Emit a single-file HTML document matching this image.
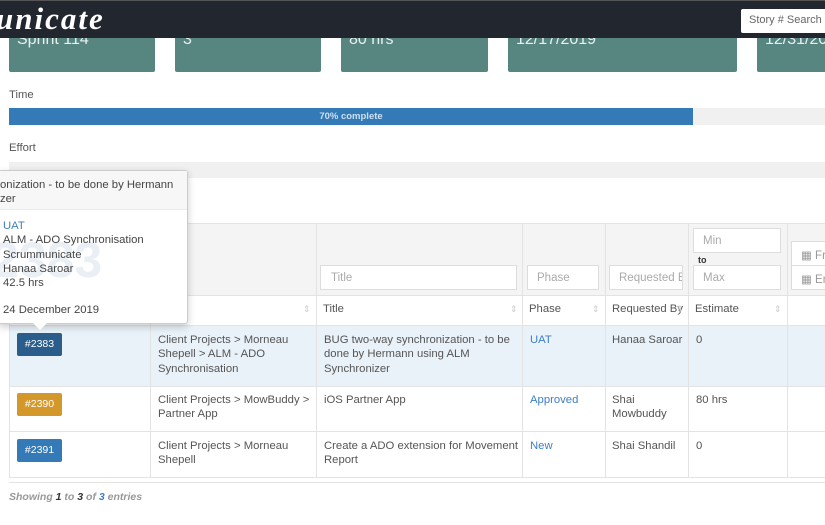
<!DOCTYPE html>
<html><head><meta charset="utf-8"><style>
*{box-sizing:border-box;margin:0;padding:0}
body{width:825px;height:525px;overflow:hidden;background:#fff;font-family:"Liberation Sans",sans-serif;font-size:11px;color:#444;position:relative}
.a{position:absolute}
.box{position:absolute;top:20px;height:52px;background:#578580;border-radius:2px;color:#e8f0ef;font-size:16px;padding:11px 8px 0}
.nav{position:absolute;left:0;top:0;width:825px;height:38px;background:#22262e;border-top:1px solid #555}
.logo{position:absolute;left:-4px;top:0px;color:#fff;font:italic bold 31px "Liberation Serif",serif;letter-spacing:2px}
.srch{position:absolute;left:741px;top:8px;width:90px;height:24px;background:#fff;border-radius:2px;color:#666;font-size:11px;padding:5px 8px}
.inp{position:absolute;height:25px;background:#fff;border:1px solid #ddd;color:#aaa;font-size:11.5px;padding:6px 9px;white-space:nowrap;overflow:hidden}
.vl{position:absolute;width:1px;background:#e3e3e3}
.hl{position:absolute;height:1px;background:#e3e3e3;left:9px;width:816px}
.t{position:absolute;line-height:14.3px;color:#555;font-size:11.3px}
.lnk{color:#3d7fc4}
.badge{position:absolute;left:17px;width:45px;height:23px;color:#fff;font-size:10.5px;text-align:center;line-height:23px;border-radius:2px}
.sort{position:absolute;color:#ccc;font-size:9px}
</style></head><body>
<div class="box" style="left:9px;width:146px">Sprint 114</div>
<div class="box" style="left:175px;width:146px">3</div>
<div class="box" style="left:341px;width:147px">80 hrs</div>
<div class="box" style="left:508px;width:229px">12/17/2019</div>
<div class="box" style="left:757px;width:80px">12/31/2019</div>
<div class="nav"><div class="logo">unicate</div><div class="srch">Story # Search</div></div>

<div class="t" style="left:9px;top:88px">Time</div>
<div class="a" style="left:9px;top:108px;width:816px;height:17px;background:#f0f0f0"></div>
<div class="a" style="left:9px;top:108px;width:684px;height:17px;background:#337ab7;color:#cfe0f0;font-weight:bold;font-size:9.5px;text-align:center;line-height:17px">70% complete</div>
<div class="t" style="left:9px;top:141px">Effort</div>
<div class="a" style="left:9px;top:162px;width:816px;height:16px;background:#f0f0f0"></div>

<div class="a" style="left:9px;top:223px;width:816px;height:72px;background:#f4f4f4;border-top:1px solid #e3e3e3"></div>
<div class="a" style="left:9px;top:325px;width:816px;height:61px;background:#e9f1f9"></div>
<div class="hl" style="top:295px"></div><div class="hl" style="top:325px"></div><div class="hl" style="top:386px"></div><div class="hl" style="top:431px"></div><div class="hl" style="top:477px"></div>
<div class="hl" style="top:482px"></div>
<div class="vl" style="left:9px;top:223px;height:254px"></div>
<div class="vl" style="left:150px;top:223px;height:254px"></div>
<div class="vl" style="left:316px;top:223px;height:254px"></div>
<div class="vl" style="left:522px;top:223px;height:254px"></div>
<div class="vl" style="left:605px;top:223px;height:254px"></div>
<div class="vl" style="left:688px;top:223px;height:254px"></div>
<div class="vl" style="left:787px;top:223px;height:254px"></div>

<div class="inp" style="left:320px;top:265px;width:197px;padding-left:10px">Title</div>
<div class="inp" style="left:527px;top:265px;width:72px">Phase</div>
<div class="inp" style="left:609px;top:265px;width:74px">Requested By</div>
<div class="inp" style="left:693px;top:228px;width:88px">Min</div>
<div class="t" style="left:698px;top:253px;font-size:9px;font-weight:bold;color:#333">to</div>
<div class="inp" style="left:693px;top:265px;width:88px">Max</div>
<div class="inp" style="left:791px;top:241px;width:40px;color:#999">&#9638; From</div>
<div class="inp" style="left:791px;top:265px;width:40px;color:#999">&#9638; End</div>

<div class="t" style="left:323px;top:302px">Title</div>
<div class="t" style="left:529px;top:302px">Phase</div>
<div class="t" style="left:612px;top:302px">Requested By</div>
<div class="t" style="left:695px;top:302px">Estimate</div>
<div class="sort" style="left:303px;top:304px">&#8661;</div><div class="sort" style="left:510px;top:304px">&#8661;</div><div class="sort" style="left:592px;top:304px">&#8661;</div><div class="sort" style="left:676px;top:304px">&#8661;</div><div class="sort" style="left:774px;top:304px">&#8661;</div>

<div class="badge" style="top:333px;background:#2a5d8c">#2383</div>
<div class="t" style="left:158px;top:333px">Client Projects &gt; Morneau<br>Shepell &gt; ALM - ADO<br>Synchronisation</div>
<div class="t" style="left:324px;top:333px">BUG two-way synchronization - to be<br>done by Hermann using ALM<br>Synchronizer</div>
<div class="t lnk" style="left:530px;top:333px">UAT</div>
<div class="t" style="left:612px;top:333px">Hanaa Saroar</div>
<div class="t" style="left:696px;top:333px">0</div>

<div class="badge" style="top:393px;background:#d4982a">#2390</div>
<div class="t" style="left:158px;top:393px">Client Projects &gt; MowBuddy &gt;<br>Partner App</div>
<div class="t" style="left:324px;top:393px">iOS Partner App</div>
<div class="t lnk" style="left:530px;top:393px">Approved</div>
<div class="t" style="left:612px;top:393px">Shai<br>Mowbuddy</div>
<div class="t" style="left:696px;top:393px">80 hrs</div>

<div class="badge" style="top:439px;background:#337ab7">#2391</div>
<div class="t" style="left:158px;top:439px">Client Projects &gt; Morneau<br>Shepell</div>
<div class="t" style="left:324px;top:439px">Create a ADO extension for Movement<br>Report</div>
<div class="t lnk" style="left:530px;top:439px">New</div>
<div class="t" style="left:612px;top:439px">Shai Shandil</div>
<div class="t" style="left:696px;top:439px">0</div>

<div class="t" style="left:9px;top:490px;font-style:italic;font-weight:bold;color:#999;font-size:10.5px">Showing <span style="color:#333">1</span> to <span style="color:#333">3</span> of <span class="lnk">3</span> entries</div>

<div class="a" style="left:-2px;top:170px;width:190px;height:154px;background:#fff;border:1px solid #ccc;border-radius:3px;box-shadow:0 3px 8px rgba(0,0,0,.2)">
<div style="position:absolute;left:0;top:0;width:188px;height:39px;background:#f7f7f7;border-bottom:1px solid #ebebeb"></div>
<div class="t" style="left:1px;top:7px;color:#444">onization - to be done by Hermann<br>zer</div>
<div class="a" style="left:-8px;top:60px;font-size:50px;font-weight:bold;color:#e9eff5">2383</div>
<div class="t" style="left:4px;top:48px;color:#444"><span class="lnk">UAT</span><br>ALM - ADO Synchronisation<br>Scrummunicate<br>Hanaa Saroar<br>42.5 hrs</div>
<div class="t" style="left:4px;top:132px;color:#444">24 December 2019</div>
</div>
<div class="a" style="left:33px;top:323px;width:0;height:0;border-left:7px solid transparent;border-right:7px solid transparent;border-top:7px solid #fff"></div>
</body></html>
